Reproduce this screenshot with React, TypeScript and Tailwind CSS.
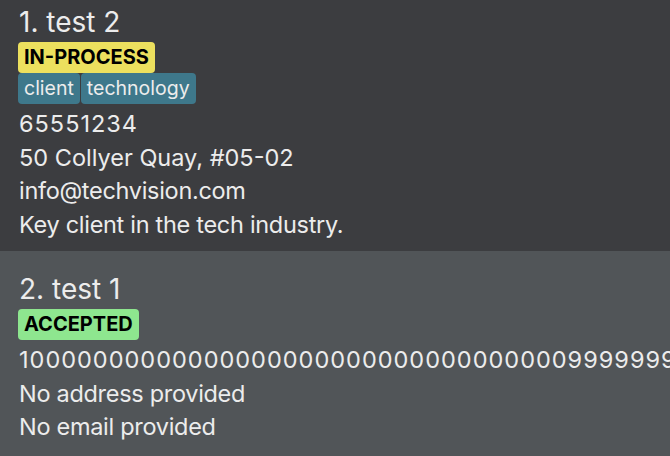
import React from "react";

type Person = {
    index: number;
    name: string;
    status: { label: string; className: string };
    tags: string[];
    phone: string;
    address: string;
    email: string;
    note?: string;
};

const people: Person[] = [
    {
        index: 1,
        name: "test 2",
        status: { label: "IN-PROCESS", className: "bg-[#ece05e]" },
        tags: ["client", "technology"],
        phone: "65551234",
        address: "50 Collyer Quay, #05-02",
        email: "info@techvision.com",
        note: "Key client in the tech industry.",
    },
    {
        index: 2,
        name: "test 1",
        status: { label: "ACCEPTED", className: "bg-[#8ee68f]" },
        tags: [],
        phone: "1000000000000000000000000000000000099999999999",
        address: "No address provided",
        email: "No email provided",
    },
];

function PersonCard({ p, first }: { p: Person; first: boolean }) {
    const hasAddress = /\d/.test(p.address);
    return (
        <div
            className={
                first
                    ? "bg-[#3c3d40] pl-[19px] pt-[3px] pb-[10px] overflow-hidden"
                    : "bg-[#515558] pl-[19px] pt-[19px] pb-[10px] overflow-hidden"
            }
        >
            <div className="text-[28px] leading-[39px] text-[#ececec] whitespace-nowrap">
                {p.index}. {p.name}
            </div>
            <div className="flex -ml-px">
                <span
                    className={`${p.status.className} text-black font-bold text-[20px] leading-[31px] px-[6px] rounded-[4px]`}
                >
                    {p.status.label}
                </span>
            </div>
            {p.tags.length > 0 && (
                <div className="flex gap-px -ml-px">
                    {p.tags.map((t) => (
                        <span
                            key={t}
                            className="bg-[#3e788b] text-[#ececec] text-[19.5px] leading-[31px] px-[6px] rounded-[4px]"
                        >
                            {t}
                        </span>
                    ))}
                </div>
            )}
            <div className="mt-[3px] text-[23.5px] leading-[33.5px] text-[#ececec] whitespace-nowrap">
                <div className="tracking-[1px]">{p.phone}</div>
                <div className={hasAddress ? "" : "tracking-[-0.3px]"}>{p.address}</div>
                <div className="tracking-[-0.3px]">{p.email}</div>
                {p.note && <div className="tracking-[-0.3px]">{p.note}</div>}
            </div>
        </div>
    );
}

export default function App() {
    return (
        <div
            className="w-[670px] h-[456px] overflow-hidden bg-[#515558]"
            style={{ fontFamily: "Inter, 'Noto Sans', sans-serif" }}
        >
            {people.map((p, i) => (
                <PersonCard key={p.index} p={p} first={i === 0} />
            ))}
        </div>
    );
}
